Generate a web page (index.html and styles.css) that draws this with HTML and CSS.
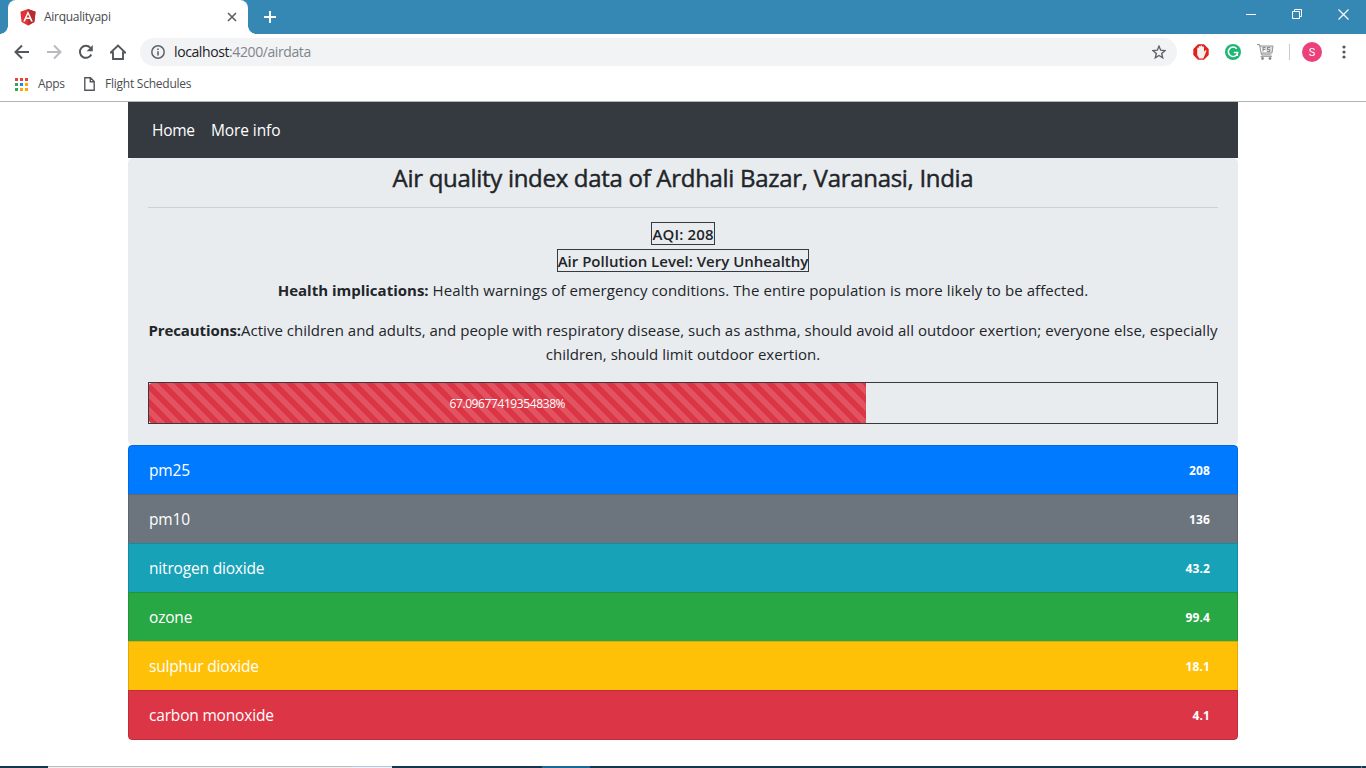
FILE: index.html
```html
<!DOCTYPE html>
<html lang="en">
<head>
<meta charset="utf-8">
<title>Airqualityapi</title>
<link rel="stylesheet" href="styles.css">
</head>
<body>
<div class="window">
  <div class="tabstrip">
    <div class="tab">
      <svg class="favicon" width="16" height="17" viewBox="0 0 16 17"><path fill="#e23237" d="M8 0 15.6 2.8 14.4 13 8 16.6 1.6 13 .4 2.8Z"/><path fill="#b52e31" d="M8 0 15.6 2.8 14.4 13 8 16.6Z"/><path fill="#fff" fill-rule="evenodd" d="M8 2 12.8 12.5H11L10 10H6L5 12.5H3.200ZM8 5.200 6.600 8.600H9.400Z"/></svg>
      <span class="t tab-title">Airqualityapi</span>
      <svg class="tab-close" width="10" height="10" viewBox="0 0 10 10"><path d="M1 1 9 9M9 1 1 9" stroke="#5f6368" stroke-width="1.700"/></svg>
    </div>
    <svg class="new-tab" width="12" height="12" viewBox="0 0 12 12"><path d="M6 0V12M0 6H12" stroke="#fff" stroke-width="2"/></svg>
    <div class="win-buttons">
      <svg width="10" height="10" viewBox="0 0 10 10"><path d="M0 5.500H10" stroke="#fff"/></svg>
      <svg width="10" height="10" viewBox="0 0 10 10"><path d="M.5 2.500H7.500V9.500H.5ZM2.500 2.500V.5H9.500V7.500H7.500" fill="none" stroke="#fff"/></svg>
      <svg width="11" height="11" viewBox="0 0 11 11"><path d="M.5.5 10.500 10.500M10.500.5.5 10.500" stroke="#fff" stroke-width="1.200"/></svg>
    </div>
  </div>

  <div class="toolbar">
    <div class="nav-icons">
      <svg width="16" height="16" viewBox="0 0 16 16"><path d="M15 8H2M8 1.500 1.500 8 8 14.500" fill="none" stroke="#54575c" stroke-width="2"/></svg>
      <svg width="16" height="16" viewBox="0 0 16 16"><path d="M1 8H14M8 1.500 14.500 8 8 14.500" fill="none" stroke="#b8babd" stroke-width="2"/></svg>
      <svg width="16" height="16" viewBox="0 0 16 16"><path d="M13.300 10.500A6 6 0 1 1 12.400 3.800" fill="none" stroke="#54575c" stroke-width="2"/><path d="M14.800 1V7.200H8.600Z" fill="#54575c"/></svg>
      <svg width="16" height="16" viewBox="0 0 16 16"><path d="M0.800 8.500 8 1.500 15.200 8.500H13V15H3V8.500Z" fill="none" stroke="#54575c" stroke-width="1.900"/></svg>
    </div>
    <div class="address">
      <svg width="14" height="14" viewBox="0 0 14 14"><circle cx="7" cy="7" r="6.200" fill="none" stroke="#5f6368" stroke-width="1.500"/><path d="M7 6.200V10.500M7 3.500V5" stroke="#5f6368" stroke-width="1.600"/></svg>
      <span class="t url"><span class="host">localhost</span>:4200/airdata</span>
      <svg class="star" width="14" height="14" viewBox="0 0 14 14"><path d="M7 1.200 8.700 5.200 13 5.600 9.700 8.500 10.700 12.800 7 10.500 3.300 12.800 4.300 8.500 1 5.600 5.300 5.200Z" fill="none" stroke="#5f6368" stroke-width="1.400"/></svg>
    </div>
    <div class="extensions">
      <svg width="16" height="16" viewBox="0 0 16 16"><path d="M5 .3H11L15.700 5V11L11 15.700H5L.3 11V5Z" fill="#e0221b"/><path d="M4.200 8V4.300a.8.8 0 0 1 1.600 0V2.800a.8.8 0 0 1 1.700 0V2.300a.8.8 0 0 1 1.800 0v1a.8.8 0 0 1 1.700 0V8l1-1.400c.8-.7 1.700-.2 1.400.5L11.400 12l-1.200 2.500H6.200L4.200 11Z" fill="#f4f0ee"/></svg>
      <svg width="16" height="16" viewBox="0 0 16 16"><circle cx="8" cy="8" r="8" fill="#1eb575"/><path d="M11.700 4.800A4.700 4.700 0 1 0 12.700 8.500H8.800M12.300 8.500V12" fill="none" stroke="#fff" stroke-width="1.500"/></svg>
      <svg width="17" height="16" viewBox="0 0 17 16"><path d="M0 .5H2.500L4.500 11H14.500M3 2H16L15 9H4.300" fill="#dedede" stroke="#959595"/><path d="M6 7.500V3.500H8.500M6 5.500H8.200M13 3.500H10.500V5.500H12.700V7.500H10" fill="none" stroke="#858585"/><path d="M3.500 12.500H15" stroke="#a5a5a5"/><circle cx="5.500" cy="14.500" r="1.400" fill="#8b8b8b"/><circle cx="13" cy="14.500" r="1.400" fill="#8b8b8b"/></svg>
      <i class="divider"></i>
      <span class="avatar">S</span>
      <svg class="kebab" width="4" height="14" viewBox="0 0 4 14"><g fill="#54575c"><circle cx="2" cy="2" r="1.600"/><circle cx="2" cy="7" r="1.600"/><circle cx="2" cy="12" r="1.600"/></g></svg>
    </div>
  </div>

  <div class="bookmarks">
    <svg width="13" height="13" viewBox="0 0 13 13"><path fill="#ea4335" d="M0 0h3v3H0zM5 0h3v3H5zM10 0h3v3h-3z"/><path fill="#34a853" d="M0 5h3v3H0zM0 10h3v3H0z"/><path fill="#1a88f5" d="M5 5h3v3H5z"/><path fill="#f9ab00" d="M10 5h3v3h-3zM5 10h3v3H5zM10 10h3v3h-3z"/></svg>
    <span class="t bm-apps">Apps</span>
    <svg width="11" height="14" viewBox="0 0 11 14"><path d="M.8.7H6.500L10.200 4.500V13.300H.8ZM6.300.7V4.700H10.200" fill="none" stroke="#54575c" stroke-width="1.400"/></svg>
    <span class="t bm-flight">Flight Schedules</span>
  </div>

  <main class="container">
    <nav class="navbar"><a class="nav-home">Home</a><a class="nav-more">More info</a></nav>
    <section class="summary">
      <h1 class="title"><span>Air quality index data of Ardhali Bazar, Varanasi, India</span></h1>
      <hr class="rule">
      <div class="tag aqi"><span>AQI: 208</span></div>
      <div class="tag level"><span>Air Pollution Level: Very Unhealthy</span></div>
      <p class="health"><b>Health implications:</b> Health warnings of emergency conditions. The entire population is more likely to be affected.</p>
      <p class="precautions"><b>Precautions:</b><span class="line1">Active children and adults, and people with respiratory disease, such as asthma, should avoid all outdoor exertion; everyone else, especially</span><br><span class="line2">children, should limit outdoor exertion.</span></p>
      <div class="progress"><div class="bar" style="width:67.0968%"><span>67.09677419354838%</span></div></div>
    </section>
    <ul class="list">
      <li class="primary"><span>pm25</span><b>208</b></li>
      <li class="secondary"><span>pm10</span><b>136</b></li>
      <li class="info"><span>nitrogen dioxide</span><b>43.2</b></li>
      <li class="success"><span>ozone</span><b>99.4</b></li>
      <li class="warning"><span>sulphur dioxide</span><b>18.1</b></li>
      <li class="danger"><span>carbon monoxide</span><b>4.1</b></li>
    </ul>
  </main>

  <div class="taskbar"><i class="search"></i><i class="mic"></i><i class="active"></i><i class="edge"></i></div>
</div>
</body>
</html>
```
FILE: styles.css
```css
* { box-sizing: border-box; }
body { margin: 0; background: #fff; font-family: "Open Sans", "Noto Sans", sans-serif; color: #212529; }
svg { display: block; flex: none; }
.window { width: 1366px; height: 768px; display: flex; flex-direction: column; overflow: hidden; }
.t { white-space: nowrap; font-size: 12px; }

.tabstrip { height: 34px; background: #3587b4; display: flex; align-items: flex-start; padding-left: 8px; flex: none; }
.tab { position: relative; width: 240px; height: 34px; background: #fff; border-radius: 8px 8px 0 0; display: flex; align-items: center; padding: 0 11px 0 12px; }
.tab::before, .tab::after { content: ""; position: absolute; bottom: 0; width: 8px; height: 8px; }
.tab::before { left: -8px; background: radial-gradient(circle at 0 0, #3587b4 7.5px, #fff 8px); }
.tab::after { right: -8px; background: radial-gradient(circle at 100% 0, #3587b4 7.5px, #fff 8px); }
.tab-title { margin-left: 8px; padding-bottom: 2px; color: #45494d; letter-spacing: -.28px; }
.tab-close { margin-left: auto; }
.new-tab { margin: 11px 0 0 16px; }
.win-buttons { margin: 9px 17px 0 auto; display: flex; gap: 36px; }

.toolbar { height: 36px; display: flex; align-items: center; padding: 0 20px 0 14px; flex: none; }
.nav-icons { display: flex; gap: 16px; width: 126px; }
.address { width: 1037px; height: 28px; border-radius: 14px; background: #f1f3f4; display: flex; align-items: center; padding: 0 11px; }
.url { font-size: 14px; color: #80868b; margin-left: 9px; padding-bottom: 1px; letter-spacing: -.4px; }
.host { color: #202124; }
.star { margin-left: auto; }
.extensions { display: flex; align-items: center; margin-left: 16px; flex: 1; }
.extensions svg + svg { margin-left: 16px; }
.divider { width: 1px; height: 16px; background: #c9cbcd; margin-left: 15px; }
.avatar { width: 20px; height: 20px; border-radius: 50%; background: #ec407a; color: #fff; margin-left: 12px; font: 11px/21px Roboto, sans-serif; text-align: center; }
.kebab { margin-left: auto; }

.bookmarks { height: 32px; display: flex; align-items: center; padding: 0 0 3px 15px; border-bottom: 1px solid #b4b5b6; color: #4a4e52; flex: none; }
.bookmarks .t { padding-bottom: 2px; }
.bm-apps { margin-left: 10px; width: 46px; letter-spacing: -.3px; }
.bm-flight { margin-left: 10px; letter-spacing: -.24px; }

.container { width: 1110px; margin: 0 auto; }
.navbar { height: 56px; background: #343a40; display: flex; align-items: center; gap: 16px; padding: 0 24px 1px; color: #fff; font-size: 15.5px; }
.navbar a { white-space: nowrap; }
.nav-home { width: 43px; letter-spacing: -.3px; }
.nav-more { letter-spacing: -.1px; }
.summary { height: 287px; background: #e9ecef; border-radius: 5px; padding: 7px 20px 0; text-align: center; white-space: nowrap; }
.title { margin: 0; height: 42px; font-size: 24px; line-height: 26px; font-weight: 500; letter-spacing: -.3px; -webkit-text-stroke: .45px #212529; }
.rule { margin: 0 0 14px; height: 1px; border: 0; background: #ced1d4; }
.tag { width: max-content; height: 23px; margin: 0 auto 4px; border: 1px solid #343a40; font-size: 15px; line-height: 23px; font-weight: 600; display: flex; justify-content: center; }
.aqi { width: 64px; letter-spacing: .15px; }
.level { width: 252px; letter-spacing: 0; }
p { font-size: 15px; line-height: 24px; font-weight: 400; }
p b { font-weight: 700; letter-spacing: 0; }
.health { margin: 6px 0 16px; letter-spacing: .08px; }
.precautions { margin: 0 0 16px; letter-spacing: .026px; }
.precautions b { letter-spacing: -.1px; }
.progress { height: 42px; border: 1px solid #343a40; }
.bar { height: 40px; border-radius: 3px 0 0 3px; background: #dc3545 linear-gradient(45deg, rgba(255,255,255,.15) 25%, transparent 25%, transparent 50%, rgba(255,255,255,.15) 50%, rgba(255,255,255,.15) 75%, transparent 75%) 0 0 / 16px 16px; color: #fff; font-size: 12px; line-height: 42px; letter-spacing: -.4px; }

.list { list-style: none; margin: 0; padding: 0; border-radius: 4px; overflow: hidden; }
.list li { height: 49px; border: 1px solid rgba(0,0,0,.125); border-bottom: 0; display: flex; align-items: center; justify-content: space-between; padding: 0 27px 0 20px; color: #fff; font-size: 15.5px; letter-spacing: -.18px; }
.list li:first-child { border-radius: 4px 4px 0 0; }
.list li:last-child { height: 50px; border-bottom: 1px solid rgba(0,0,0,.125); border-radius: 0 0 4px 4px; }
.list b { font-size: 12px; letter-spacing: .1px; }
.primary { background: #007bff; }
.secondary { background: #6c757d; }
.info { background: #17a2b8; }
.success { background: #28a745; }
.warning { background: #ffc107; }
.danger { background: #dc3545; }

.taskbar { margin-top: auto; height: 2px; background: #15364f; display: flex; padding-left: 48px; flex: none; }
.taskbar i { height: 2px; }
.search { width: 304px; background: linear-gradient(#bbb 50%, #f0f0f0 50%); }
.mic { width: 40px; background: linear-gradient(#b9c9d8 50%, #eaf4fc 50%); }
.active { width: 48px; margin-left: 150px; background: #1d6798; }
.edge { width: 1px; margin-left: auto; margin-right: 4px; background: #6d8293; }
```
